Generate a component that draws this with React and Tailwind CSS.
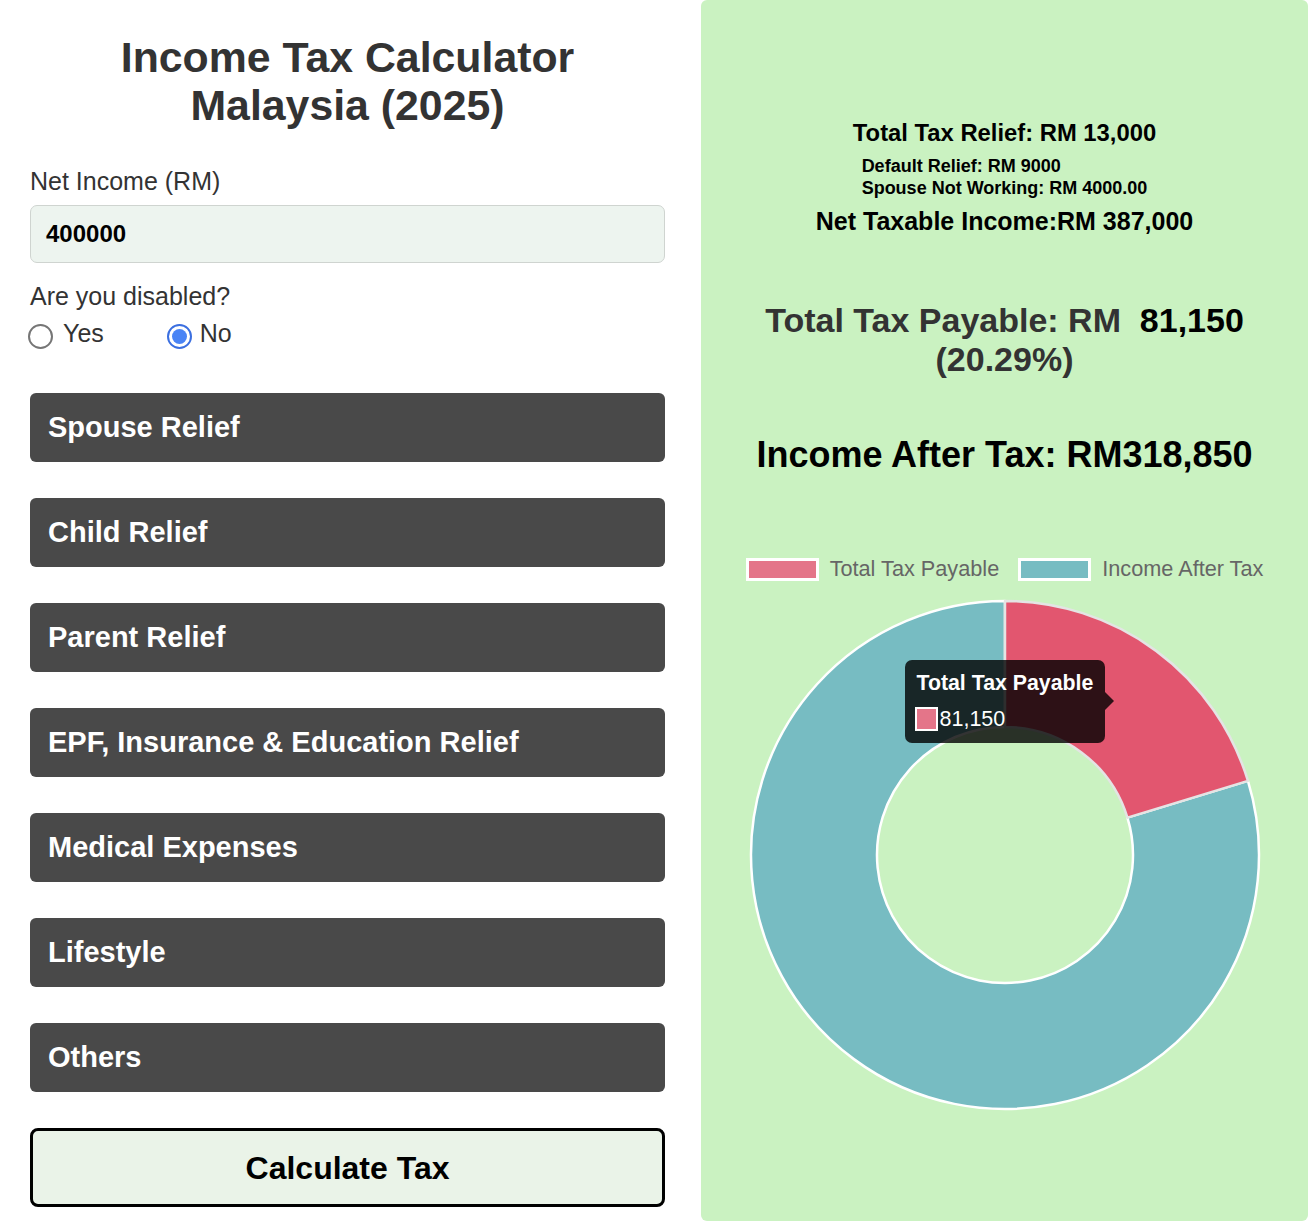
import React from "react";

const sections = [
  "Spouse Relief",
  "Child Relief",
  "Parent Relief",
  "EPF, Insurance & Education Relief",
  "Medical Expenses",
  "Lifestyle",
  "Others",
];

function Donut() {
  return (
    <svg width="520" height="520" viewBox="0 0 520 520">
      <path
        d="M502.95 185.91 A254 254 0 1 1 260 6 L260 132 A128 128 0 1 0 382.43 222.66 Z"
        fill="#77bcc2"
        stroke="#ffffff"
        strokeWidth="2.5"
        strokeLinejoin="round"
      />
      <path
        d="M260 6 A254 254 0 0 1 502.95 185.91 L382.43 222.66 A128 128 0 0 0 260 132 Z"
        fill="#e2566f"
        stroke="#e4e4e4"
        strokeWidth="2.5"
        strokeLinejoin="round"
      />
    </svg>
  );
}

export default function App() {
  return (
    <div className="w-[1310px] min-h-[1222px] bg-white font-['Liberation_Sans',Arial,sans-serif]">
      <div className="flex pl-[30px] gap-[36px]">
        {/* Left column */}
        <div className="w-[635px] flex flex-col">
          <h1 className="mt-[33px] text-center text-[42.8px] leading-[48px] font-bold text-[#333]">
            Income Tax Calculator
            <br />
            Malaysia (2025)
          </h1>

          <label className="mt-[38px] text-[25px] leading-[29px] text-[#333]">
            Net Income (RM)
          </label>
          <div className="mt-[9px] h-[58px] rounded-[7px] border border-[#cfd4d0] bg-[#edf4ef] flex items-center pl-[15px] text-[24px] font-bold text-black">
            400000
          </div>

          <div className="mt-[19px] text-[25px] leading-[29px] text-[#333]">
            Are you disabled?
          </div>
          <div className="mt-[8px] flex items-center h-[30px] text-[25px] text-[#333]">
            <span className="ml-[-2px] mt-[5px] w-[25px] h-[25px] rounded-full border-[2px] border-[#767676] bg-white shrink-0" />
            <span className="ml-[10px]">Yes</span>
            <span className="ml-[63px] mt-[5px] w-[25px] h-[25px] rounded-full border-[2px] border-[#3b6fe0] bg-white shrink-0 flex items-center justify-center">
              <span className="w-[15px] h-[15px] rounded-full bg-[#4a84f5]" />
            </span>
            <span className="ml-[8px]">No</span>
          </div>

          <div className="mt-[44px] flex flex-col gap-[36px]">
            {sections.map((s) => (
              <div
                key={s}
                className="h-[69px] rounded-[6px] bg-[#494949] flex items-center pl-[18px] text-[29px] font-bold text-white"
              >
                {s}
              </div>
            ))}
          </div>

          <button className="mt-[36px] h-[79px] rounded-[8px] border-[3px] border-black bg-[#eaf3e8] text-[32px] font-bold text-black">
            Calculate Tax
          </button>
        </div>

        {/* Right panel */}
        <div className="w-[607px] h-[1221px] rounded-[6px] bg-[#caf2c1] flex flex-col items-center">
          <div className="mt-[119px] text-[23.8px] leading-[28px] font-bold text-black">
            Total Tax Relief: RM 13,000
          </div>
          <div className="mt-[8px] text-left text-[18px] leading-[22px] font-bold text-black">
            <div>Default Relief: RM 9000</div>
            <div>Spouse Not Working: RM 4000.00</div>
          </div>
          <div className="mt-[8px] text-[25px] leading-[29px] font-bold text-black">
            Net Taxable Income:RM 387,000
          </div>

          <div className="mt-[65px] text-center text-[34px] leading-[39px] font-bold text-[#333]">
            Total Tax Payable: RM&nbsp; <span className="text-black">81,150</span>
            <br />
            (20.29%)
          </div>

          <div className="mt-[55px] text-[36px] leading-[41px] font-bold text-black">
            Income After Tax: RM318,850
          </div>

          <div className="mt-[83px] flex items-center h-[23px] text-[21.7px] text-[#666]">
            <span className="w-[73px] h-[23px] border-[3px] border-white bg-[#e47589]" />
            <span className="ml-[11px]">Total Tax Payable</span>
            <span className="ml-[19px] w-[73px] h-[23px] border-[3px] border-white bg-[#77bcc2]" />
            <span className="ml-[11px]">Income After Tax</span>
          </div>

          <div className="mt-[14px] relative w-[520px] h-[520px]">
            <Donut />
            <div className="absolute left-[160px] top-[65px] w-[200px] h-[83px] rounded-[7px] bg-black/80 pl-[12px] pt-[10px] whitespace-nowrap">
              <div className="text-[21.3px] leading-[26px] font-bold text-white">
                Total Tax Payable
              </div>
              <div className="mt-[11px] flex items-center -ml-[2px]">
                <span className="w-[23px] h-[24px] border-[2px] border-white bg-[#e47589]" />
                <span className="ml-[2px] text-[21.5px] leading-[24px] text-white">81,150</span>
              </div>
              <span className="absolute right-[-9px] top-[32px] w-0 h-0 border-y-[9px] border-y-transparent border-l-[9px] border-l-black/80" />
            </div>
          </div>
        </div>
      </div>
    </div>
  );
}
